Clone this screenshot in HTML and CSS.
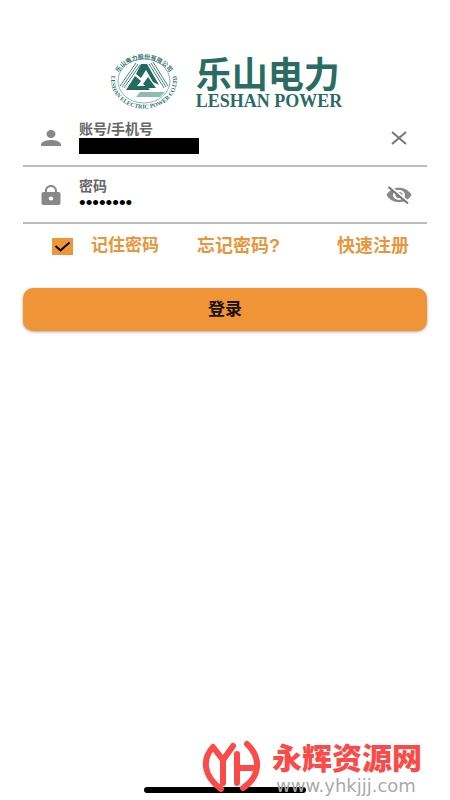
FILE: index.html
```html
<!DOCTYPE html>
<html lang="zh-CN">
<head>
<meta charset="utf-8">
<meta name="viewport" content="width=device-width, initial-scale=1">
<title>乐山电力</title>
<link rel="stylesheet" href="styles.css">
</head>
<body>
<main class="page">
  <header class="brand">
    <svg class="seal" viewBox="0 0 72 64" aria-hidden="true">
      <defs>
        <path id="arc-top" d="M11 22A28 24 0 0 1 61 22"/>
        <path id="arc-bottom" d="M5 21A33 28 0 1 0 67 21"/>
      </defs>
      <ellipse class="seal-ring" cx="36" cy="31" rx="26" ry="22"/>
      <text class="seal-text"><textPath href="#arc-top" startOffset="50%" text-anchor="middle">乐山电力股份有限公司</textPath></text>
      <text class="seal-latin"><textPath href="#arc-bottom" startOffset="50%" text-anchor="middle">LESHAN ELECTRIC POWER CO.LTD</textPath></text>
      <path class="seal-line" d="M32 15L16 38M30 14L14 37M28 13L12 36M41 14l15 24M43 13l15 24M45 12l15 24"/>
      <path class="seal-dark" d="M33 14h6l12 21-6-3-7-12-5 8-5-4z"/>
      <path class="seal-dark" d="M27 26l6 5-4 5h10l3 4H18z"/>
      <path class="seal-dark" d="M40 27l8 11h-8l-5-4z"/>
      <path class="seal-soft" d="M32 42h25l-5 5H28z"/>
    </svg>
    <div class="brand-name">
      <span class="brand-zh">乐山电力</span>
      <span class="brand-en">LESHAN POWER</span>
    </div>
  </header>

  <form class="login">
    <div class="field">
      <svg class="icon" viewBox="0 0 24 24" aria-hidden="true"><path d="M12 12c2.700 0 4.500-1.700 4.500-4S14.700 4 12 4 7.500 5.700 7.500 8s1.800 4 4.500 4zm0 2c-3.500 0-10 1.300-10 4.500V20h20v-1.500c0-3.200-6.500-4.500-10-4.500z"/></svg>
      <div class="field-body">
        <label for="account">账号/手机号</label>
        <input class="masked" id="account" type="text">
      </div>
      <button class="icon-button" type="button" aria-label="清除">
        <svg class="icon-action" viewBox="0 0 26 24"><path class="stroke" d="M6 6l14 12M20 6L6 18"/></svg>
      </button>
    </div>
    <div class="field">
      <svg class="icon" viewBox="0 0 24 24" aria-hidden="true"><path fill-rule="evenodd" d="M19.500 9H18V7.500C18 4.500 15.300 2 12 2S6 4.500 6 7.500V9H4.500C3.300 9 2.500 9.800 2.500 11v9c0 1.200.8 2 2 2h15c1.200 0 2-.8 2-2v-9c0-1.200-.8-2-2-2zM8 7.500C8 5.500 9.800 4 12 4s4 1.500 4 3.500V9H8zM12 17.500a2.300 2 0 1 1 0-4 2.300 2 0 1 1 0 4z"/></svg>
      <div class="field-body">
        <label for="password">密码</label>
        <input class="password" id="password" type="password" value="12345678">
      </div>
      <button class="icon-button" type="button" aria-label="显示密码">
        <svg class="icon-action" viewBox="0 0 26 24"><path d="M.5 12C3 7.500 7.500 4.800 13 4.800S23 7.500 25.500 12C23 16.500 18.500 19.200 13 19.200S3 16.500.5 12z"/><ellipse class="eye-white" cx="13" cy="12" rx="6" ry="5"/><ellipse cx="13" cy="12" rx="3.600" ry="3"/><path class="eye-gap" d="M4 3l20 17"/><path class="stroke" d="M2.500 4L22 20.500"/></svg>
      </button>
    </div>

    <div class="options">
      <label class="remember"><input type="checkbox" checked><span>记住密码</span></label>
      <a class="forgot" href="#">忘记密码?</a>
      <a class="register" href="#">快速注册</a>
    </div>
    <button class="submit" type="submit">登录</button>
  </form>

  <div class="home-bar"></div>
</main>

<aside class="watermark">
  <svg class="mark" viewBox="0 0 56 52" aria-hidden="true">
    <path d="M16 46C-2 33-3 16 8 4l10 13L28 3M18 17v23M32 11v29M32 25h19M42 1c14 13 14 32-4 44"/>
  </svg>
  <div class="mark-text">
    <span class="mark-zh">永辉资源网</span>
    <span class="mark-url">www.yhkjjj.com</span>
  </div>
</aside>
</body>
</html>
```

FILE: styles.css
```css
* {
  box-sizing: border-box;
}

body {
  margin: 0;
  background: #fff;
  font-family: "Liberation Sans", "Noto Sans CJK SC", sans-serif;
}

button,
input {
  margin: 0;
  padding: 0;
  border: 0;
  background: none;
  font: inherit;
}

.page {
  display: flex;
  flex-direction: column;
  min-height: 100vh;
  padding: 50px 23px 7px;
}

.brand {
  display: flex;
  justify-content: center;
  gap: 16px;
  height: 60px;
}

.seal {
  width: 72px;
  height: 64px;
  overflow: visible;
}

.seal-ring {
  fill: none;
  stroke: #8ab5ac;
  stroke-width: 1;
}

.seal-text {
  fill: #2c7568;
  font-size: 6px;
  font-weight: 700;
}

.seal-latin {
  fill: #2c7568;
  font-family: "Liberation Serif", serif;
  font-size: 6px;
  font-weight: 700;
}

.seal-dark {
  fill: #236a60;
}

.seal-line {
  fill: none;
  stroke: #43877c;
  stroke-width: 1;
}

.seal-soft {
  fill: #8fbbb4;
}

.brand-name {
  display: flex;
  flex-direction: column;
  padding-top: 8px;
  color: #2a6c62;
  white-space: nowrap;
}

.brand-zh {
  font-size: 36px;
  font-weight: 700;
  line-height: 36px;
}

.brand-en {
  font-family: "Liberation Serif", serif;
  font-size: 18px;
  font-weight: 700;
  line-height: 14px;
}

.field {
  display: flex;
  align-items: center;
  gap: 16px;
  height: 57px;
  padding: 0 14px 0 16px;
  border-bottom: 2px solid #bcbcbc;
}

.icon {
  width: 24px;
  height: 24px;
  fill: #888;
}

.field-body {
  display: flex;
  flex: 1;
  flex-direction: column;
  gap: 1px;
  min-width: 0;
}

.field-body label {
  color: #666;
  font-size: 14px;
  font-weight: 700;
  line-height: 16px;
}

.field-body input {
  height: 16px;
}

.masked {
  width: 120px;
  background: #000;
  color: #000;
}

.password {
  width: 100%;
  color: #000;
  font-size: 19px;
  line-height: 16px;
}

.icon-button {
  display: flex;
}

.icon-action {
  width: 28px;
  height: 24px;
  fill: #888;
}

.stroke {
  fill: none;
  stroke: #777;
  stroke-width: 2;
}

.eye-white {
  fill: #fff;
}

.eye-gap {
  fill: none;
  stroke: #fff;
  stroke-width: 2;
}

.options {
  display: flex;
  align-items: center;
  height: 44px;
  padding: 0 18px 0 29px;
  color: #e8963c;
  font-size: 17px;
  font-weight: 700;
  line-height: 20px;
}

.options a {
  color: inherit;
  font-size: 18px;
  text-decoration: none;
}

.remember {
  display: flex;
  align-items: center;
  gap: 18px;
}

.remember input {
  width: 21px;
  height: 17px;
  appearance: none;
  background: #ef9537;
}

.remember input:checked {
  background: #ef9537 url("data:image/svg+xml,%3Csvg xmlns='http://www.w3.org/2000/svg' viewBox='0 0 21 17'%3E%3Cpath d='M3.500 8l5 4.500 9-8' fill='none' stroke='%23000' stroke-width='2'/%3E%3C/svg%3E") center / contain no-repeat;
}

.forgot {
  margin-left: 38px;
}

.register {
  margin-left: auto;
}

.submit {
  width: 100%;
  height: 43px;
  margin-top: 20px;
  border-radius: 10px;
  background: #ef9537;
  box-shadow: 0 1px 3px rgba(0, 0, 0, 0.35);
  color: #1d1005;
  font-size: 17px;
  font-weight: 700;
  line-height: 20px;
}

.home-bar {
  align-self: center;
  width: 40%;
  min-width: 160px;
  height: 6px;
  margin-top: auto;
  border-radius: 3px;
  background: #000;
}

.watermark {
  position: absolute;
  right: 27px;
  bottom: 3px;
  display: flex;
  gap: 11px;
}

.mark {
  width: 56px;
  height: 52px;
  overflow: visible;
  fill: none;
  stroke: #fa4b48;
  stroke-width: 6;
  stroke-linecap: round;
  stroke-linejoin: round;
}

.mark-text {
  display: flex;
  flex-direction: column;
  width: 151px;
  white-space: nowrap;
}

.mark-zh {
  color: #fa4b48;
  font-size: 30px;
  font-weight: 900;
  line-height: 32px;
}

.mark-url {
  padding-left: 4px;
  color: #aaa;
  font-family: "DejaVu Sans", sans-serif;
  font-size: 18px;
  line-height: 22px;
}
```
